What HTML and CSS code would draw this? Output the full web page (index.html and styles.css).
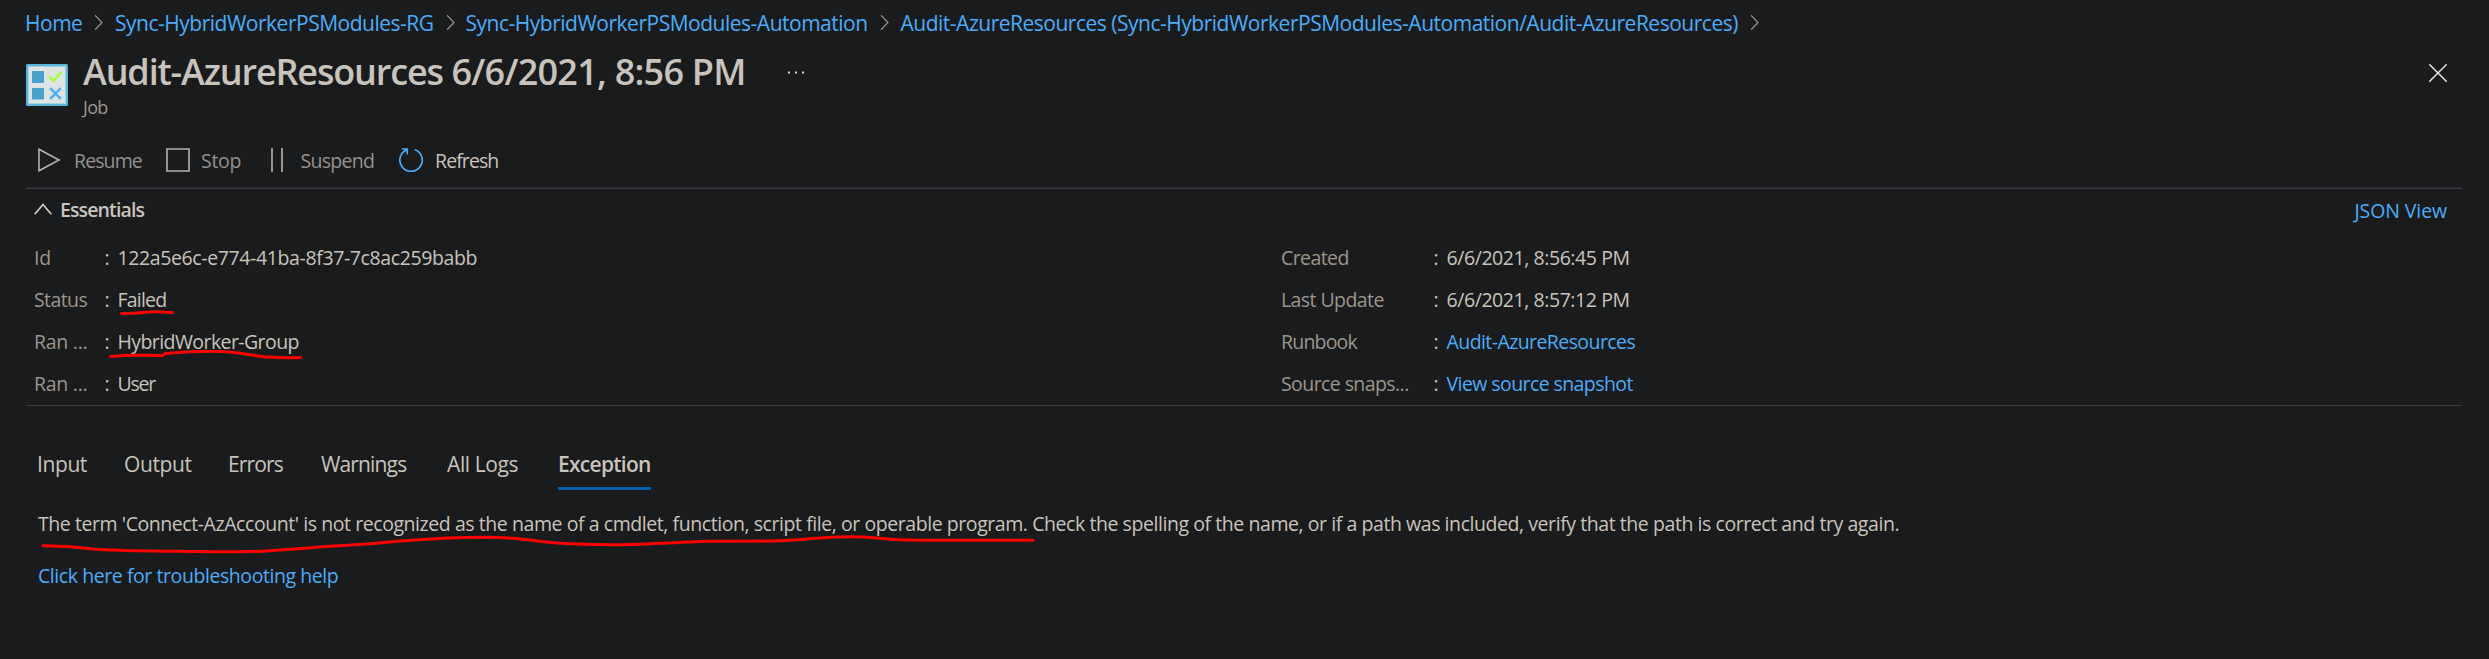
FILE: index.html
```html
<!DOCTYPE html>
<html lang="en">
<head>
<meta charset="utf-8">
<title>Audit-AzureResources 6/6/2021, 8:56 PM</title>
<link rel="stylesheet" href="styles.css">
</head>
<body>
<nav class="breadcrumb">
  <a class="link">Home</a>
  <svg class="crumb-sep" viewBox="0 0 10 17"><path d="M1 1.2 8 8.5 1 15.8"/></svg>
  <a class="link">Sync-HybridWorkerPSModules-RG</a>
  <svg class="crumb-sep" viewBox="0 0 10 17"><path d="M1 1.2 8 8.5 1 15.8"/></svg>
  <a class="link">Sync-HybridWorkerPSModules-Automation</a>
  <svg class="crumb-sep" viewBox="0 0 10 17"><path d="M1 1.2 8 8.5 1 15.8"/></svg>
  <a class="link">Audit-AzureResources (Sync-HybridWorkerPSModules-Automation/Audit-AzureResources)</a>
  <svg class="crumb-sep" viewBox="0 0 10 17"><path d="M1 1.2 8 8.5 1 15.8"/></svg>
</nav>

<header class="header">
  <svg class="job-icon" viewBox="0 0 42 42">
    <rect width="42" height="42" rx="1.5" fill="#59b4d9"/>
    <rect x="2" y="2" width="38" height="38" fill="#a5d0e0"/>
    <rect x="3" y="3" width="36" height="36" fill="#dde4e3"/>
    <rect x="6" y="7" width="12" height="12" rx=".8" fill="#4a9fcd"/>
    <rect x="6" y="24" width="12" height="11.500" rx=".8" fill="#4a9fcd"/>
    <path d="M23.300 12.700 27.700 16.900 35.300 7.600" fill="none" stroke="#a6fb4a" stroke-width="2.600"/>
    <path d="M24.200 24.200 34.800 34.800M34.800 24.200 24.200 34.800" fill="none" stroke="#4fb0fb" stroke-width="2.600"/>
  </svg>
  <div class="heading">
    <h1 class="title"><span class="title-name">Audit-AzureResources</span> 6/6/2021, 8:56 PM</h1>
    <div class="subtitle">Job</div>
  </div>
  <svg class="more" viewBox="0 0 17 3"><path d="M0 .5h2v2H0zM7 .5h2v2H7zM14 .5h2v2h-2z"/></svg>
  <svg class="close" viewBox="0 0 18 18"><path d="M.3.3 17.700 17.700M17.700.3.3 17.700"/></svg>
</header>

<div class="toolbar">
  <button class="tool tool-resume disabled"><svg viewBox="0 0 24 24"><path d="M2 1.200v21.600L22 12z"/></svg><span>Resume</span></button>
  <button class="tool tool-stop disabled"><svg viewBox="0 0 24 24"><path d="M1 1h22v22H1z"/></svg><span>Stop</span></button>
  <button class="tool tool-suspend disabled"><svg viewBox="0 0 24 24"><path d="M7 0v24M17 0v24"/></svg><span>Suspend</span></button>
  <button class="tool tool-refresh"><svg viewBox="0 0 24 24"><path d="M15.500 1.500A11.200 11.200 0 1 1 8 1.700M3 1h5.300v5.500"/></svg><span>Refresh</span></button>
</div>

<section class="essentials">
  <div class="essentials-head">
    <svg class="caret" viewBox="0 0 18 12"><path d="M.7 11.200 9 1.500 17.300 11.200"/></svg>
    <h2 class="essentials-title">Essentials</h2>
    <a class="link json-link">JSON View</a>
  </div>
  <div class="props">
    <dl class="prop-list">
      <dt class="snug">Id</dt><dd class="id">122a5e6c-e774-41ba-8f37-7c8ac259babb</dd>
      <dt>Status</dt><dd class="tight">Failed</dd>
      <dt class="snug">Ran ...</dt><dd>HybridWorker-Group</dd>
      <dt class="snug">Ran ...</dt><dd class="user">User</dd>
    </dl>
    <dl class="prop-list prop-list-wide">
      <dt>Created</dt><dd class="date">6/6/2021, 8:56:45 PM</dd>
      <dt>Last Update</dt><dd class="date">6/6/2021, 8:57:12 PM</dd>
      <dt class="tight">Runbook</dt><dd><a class="link">Audit-AzureResources</a></dd>
      <dt>Source snaps...</dt><dd><a class="link">View source snapshot</a></dd>
    </dl>
  </div>
</section>

<div class="tabs">
  <span class="tab">Input</span>
  <span class="tab">Output</span>
  <span class="tab tab-tight">Errors</span>
  <span class="tab tab-tight">Warnings</span>
  <span class="tab">All Logs</span>
  <span class="tab tab-active">Exception</span>
</div>

<main class="exception">
  <p class="message">The term 'Connect-AzAccount' is not recognized as the name of a cmdlet, function, script file, or operable program. Check the spelling of the name, or if a path was included, verify that the path is correct and try again.</p>
  <a class="link help">Click here for troubleshooting help</a>
</main>

<svg class="marks" viewBox="0 0 2489 659">
  <path d="M121.500 313.500C135 314 145 312 155 311.800S165 312.600 172.500 312.600"/>
  <path d="M110.500 356.500 117 356C128 354.200 150 355.700 163 355.500L165 353.600C180 352.300 210 350.300 230 352 245 353.300 255 356.300 268 357 280 358 290 358 300.500 357.600"/>
  <path d="M43 545.700C52 546 62 546 71 546.700S90 549 105 549.700C130 550.800 152 551 179 551.300S220 552 241 551.700 263 551 281 550 313 547.500 330 546.300 354 545 370 543.700 390 541.700 411 540.300C435 538.500 460 537.300 482 537.300S505 537.700 518 538.700 547 542.700 562 543.300 590 544.800 616 544.700 680 542.200 708 541.300C730 541 755 541.700 779 540.700S800 539.300 815 538.300 838 536.700 853 536.700 876 538.300 891 539.300 915 540.300 936 540.300H1033"/>
</svg>
</body>
</html>
```
FILE: styles.css
```css
* { box-sizing: border-box; }

body {
  margin: 0;
  height: 659px;
  overflow: hidden;
  position: relative;
  background: #1a1b1c;
  color: #c8c3bc;
  font: 400 19.5px/27px "Open Sans", "Noto Sans", sans-serif;
  letter-spacing: -0.58px;
}

h1, h2, p, dl, dd { margin: 0; }
svg { display: block; flex: none; }
.link { color: #4aadfa; }

.breadcrumb {
  display: grid;
  grid-template-columns: 69px 21px 331px 19.5px 414px 21px 849.5px 20px;
  padding: 9px 0 0 25px;
  font-size: 21px;
  line-height: 28px;
  letter-spacing: -0.49px;
  white-space: nowrap;
}
.crumb-sep {
  width: 10px;
  height: 17px;
  margin-top: 5px;
  fill: none;
  stroke: #8f8a84;
  stroke-width: 1.3;
}

.header {
  display: flex;
  height: 110px;
  padding: 10px 42px 0 26px;
}
.job-icon { width: 42px; height: 42px; margin-top: 17px; }
.heading { width: 720px; padding-left: 15px; white-space: nowrap; }
.title {
  font-size: 36px;
  font-weight: 600;
  line-height: 49px;
  letter-spacing: -0.76px;
}
.title-name { letter-spacing: -1.15px; }
.subtitle {
  margin-top: -1px;
  color: #9c958d;
  font-size: 18px;
  line-height: 24px;
  letter-spacing: -0.7px;
}
.more { width: 17px; height: 3px; margin-top: 24px; fill: #d8d4ce; }
.close {
  width: 18px;
  height: 18px;
  margin: 17px 0 0 auto;
  stroke: #f0eeec;
  stroke-width: 1.4;
}

.toolbar {
  display: flex;
  height: 42px;
  margin: 0 27px 0 26px;
  padding-left: 11px;
  border-bottom: 1px solid #3c3d41;
  box-shadow: inset 0 -1px #27282b;
}
.tool {
  display: flex;
  gap: 12px;
  padding: 0;
  border: 0;
  background: none;
  color: inherit;
  font: inherit;
  letter-spacing: -0.9px;
}
.tool svg {
  width: 24px;
  height: 24px;
  margin-top: 1px;
  fill: none;
  stroke: #b5b1ab;
  stroke-width: 1.6;
}
.disabled { color: #94918e; }
.tool-resume { width: 129px; gap: 13px; }
.tool-stop { width: 99px; gap: 11px; letter-spacing: -0.3px; }
.tool-suspend { width: 134px; gap: 11.5px; letter-spacing: -0.71px; }
.tool-refresh svg { stroke: #4aadfa; }

.essentials {
  height: 217px;
  margin: 0 27px 0 26px;
  padding: 7px 15px 0 8px;
  border-bottom: 1px solid #38393b;
}
.essentials-head { display: flex; height: 48px; }
.caret {
  width: 18px;
  height: 12px;
  margin-top: 7px;
  fill: none;
  stroke: #d0ccc5;
  stroke-width: 1.7;
}
.essentials-title {
  padding-left: 8px;
  font-size: 19.5px;
  font-weight: 600;
  letter-spacing: -0.88px;
}
.json-link { margin: 1px 0 0 auto; letter-spacing: -0.1px; }

.props { display: grid; grid-template-columns: 1247px 1fr; }
.prop-list {
  display: grid;
  grid-template-columns: 70.5px 1fr;
  grid-auto-rows: 27px;
  row-gap: 15px;
  white-space: nowrap;
}
.prop-list-wide { grid-template-columns: 152.5px 1fr; }
dt { color: #9c958c; }
dd::before {
  content: ":";
  display: inline-block;
  width: 13px;
  letter-spacing: 0;
}
.snug { letter-spacing: -0.27px; }
.tight { letter-spacing: -0.8px; }
.id { letter-spacing: -0.38px; }
.date { letter-spacing: -0.43px; }
.user { letter-spacing: -1.2px; }

.tabs {
  display: grid;
  grid-template-columns: 87px 104px 93px 126px 111px 93px;
  height: 84px;
  padding: 44px 0 0 37px;
  font-size: 21px;
  line-height: 28px;
  letter-spacing: -0.4px;
}
.tab-tight { letter-spacing: -0.85px; }
.tab-active {
  height: 40px;
  border-bottom: 3px solid #0062ad;
  font-weight: 600;
  letter-spacing: -0.73px;
}

.exception {
  display: grid;
  gap: 25px;
  padding: 20px 0 0 38px;
}
.message { letter-spacing: -0.435px; white-space: nowrap; }
.help { letter-spacing: -0.43px; }

/* Freehand red underlines drawn over the page */
.marks {
  position: absolute;
  inset: 0;
  width: 2489px;
  height: 659px;
  fill: none;
  stroke: #fb0000;
  stroke-width: 3;
  stroke-linecap: round;
  stroke-linejoin: round;
  pointer-events: none;
}
```
